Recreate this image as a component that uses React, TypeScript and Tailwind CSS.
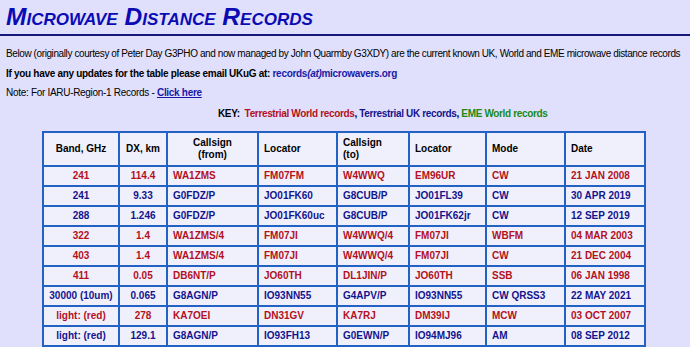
const RED = 'text-[#b3101c]';
const BLUE = 'text-[#14148c]';

type Row = {
  band: string;
  dx: string;
  from: string;
  fromLoc: string;
  to: string;
  toLoc: string;
  mode: string;
  date: string;
  uk?: boolean;
};

const rows: Row[] = [
  { band: '241', dx: '114.4', from: 'WA1ZMS', fromLoc: 'FM07FM', to: 'W4WWQ', toLoc: 'EM96UR', mode: 'CW', date: '21 JAN 2008' },
  { band: '241', dx: '9.33', from: 'G0FDZ/P', fromLoc: 'JO01FK60', to: 'G8CUB/P', toLoc: 'JO01FL39', mode: 'CW', date: '30 APR 2019', uk: true },
  { band: '288', dx: '1.246', from: 'G0FDZ/P', fromLoc: 'JO01FK60uc', to: 'G8CUB/P', toLoc: 'JO01FK62jr', mode: 'CW', date: '12 SEP 2019', uk: true },
  { band: '322', dx: '1.4', from: 'WA1ZMS/4', fromLoc: 'FM07JI', to: 'W4WWQ/4', toLoc: 'FM07JI', mode: 'WBFM', date: '04 MAR 2003' },
  { band: '403', dx: '1.4', from: 'WA1ZMS/4', fromLoc: 'FM07JI', to: 'W4WWQ/4', toLoc: 'FM07JI', mode: 'CW', date: '21 DEC 2004' },
  { band: '411', dx: '0.05', from: 'DB6NT/P', fromLoc: 'JO60TH', to: 'DL1JIN/P', toLoc: 'JO60TH', mode: 'SSB', date: '06 JAN 1998' },
  { band: '30000 (10um)', dx: '0.065', from: 'G8AGN/P', fromLoc: 'IO93NN55', to: 'G4APV/P', toLoc: 'IO93NN55', mode: 'CW QRSS3', date: '22 MAY 2021', uk: true },
  { band: 'light: (red)', dx: '278', from: 'KA7OEI', fromLoc: 'DN31GV', to: 'KA7RJ', toLoc: 'DM39IJ', mode: 'MCW', date: '03 OCT 2007' },
  { band: 'light: (red)', dx: '129.1', from: 'G8AGN/P', fromLoc: 'IO93FH13', to: 'G0EWN/P', toLoc: 'IO94MJ96', mode: 'AM', date: '08 SEP 2012', uk: true },
];

const cell = 'border-2 border-[#2162c4] bg-[#f0f0fd] px-[5px] py-0 whitespace-nowrap';
const mid = 'border-2 border-[#2162c4] bg-[#f0f0fd] px-[2px] py-0 text-center whitespace-nowrap';

export default function App() {
  return (
    <div className="h-[347px] w-[690px] overflow-hidden bg-[#e0e0fd] font-['Liberation_Sans',Arial,sans-serif] text-[10px] text-black">
      <div className="px-[6px] pt-[2px]">
        <h1 className="text-[24.5px] font-bold italic leading-[30px] text-[#0b0bb4] [font-variant-caps:small-caps]">
          Microwave Distance Records
        </h1>
      </div>
      <div className="mt-[2px] h-[2px] w-full bg-[#17177a]" />
      <div className="px-[6px]">
        <p className="mt-[11px] whitespace-nowrap leading-[13px] tracking-[-0.4px]">
          Below (originally courtesy of Peter Day G3PHO and now managed by John Quarmby G3XDY) are the current known UK, World and EME microwave distance records
        </p>
        <p className="mt-[7px] font-bold leading-[13px] tracking-[-0.3px]">
          If you have any updates for the table please email UKuG at:{' '}
          <span className="text-[#1a1aa6]">
            records<i>(at)</i>microwavers.org
          </span>
        </p>
        <p className="mt-[6px] leading-[13px] tracking-[-0.3px]">
          Note: For IARU-Region-1 Records -{' '}
          <a className="font-bold text-[#1a1aa6] underline">Click here</a>
        </p>
        <p className="mt-[8px] pl-[212px] font-bold leading-[13px] tracking-[-0.35px]">
          KEY:&nbsp; <span className={RED}>Terrestrial World records</span>,{' '}
          <span className={BLUE}>Terrestrial UK records</span>,{' '}
          <span className="text-[#178a17]">EME World records</span>
        </p>
      </div>
      <table className="ml-[42px] mt-[11px] w-[602px] table-fixed border-collapse border-2 border-[#2162c4] font-bold">
        <colgroup>
          <col className="w-[76px]" />
          <col className="w-[48px]" />
          <col className="w-[91px]" />
          <col className="w-[79px]" />
          <col className="w-[72px]" />
          <col className="w-[77px]" />
          <col className="w-[79px]" />
          <col className="w-[80px]" />
        </colgroup>
        <thead>
          <tr className="h-[34px] leading-[12px]">
            <th className={mid}>Band, GHz</th>
            <th className={mid}>DX, km</th>
            <th className={mid}>
              Callsign
              <br />
              (from)
            </th>
            <th className={`${cell} text-left`}>Locator</th>
            <th className={`${cell} text-left`}>
              Callsign
              <br />
              (to)
            </th>
            <th className={`${cell} text-left`}>Locator</th>
            <th className={`${cell} text-left`}>Mode</th>
            <th className={`${cell} text-left`}>Date</th>
          </tr>
        </thead>
        <tbody>
          {rows.map((r, i) => {
            const color = r.uk ? BLUE : RED;
            return (
              <tr key={i} className={`${color} h-[20px] leading-[12px]`}>
                <td className={mid}>{r.band}</td>
                <td className={mid}>{r.dx}</td>
                <td className={cell}>{r.from}</td>
                <td className={cell}>{r.fromLoc}</td>
                <td className={cell}>{r.to}</td>
                <td className={cell}>{r.toLoc}</td>
                <td className={cell}>{r.mode}</td>
                <td className={cell}>{r.date}</td>
              </tr>
            );
          })}
        </tbody>
      </table>
    </div>
  );
}
